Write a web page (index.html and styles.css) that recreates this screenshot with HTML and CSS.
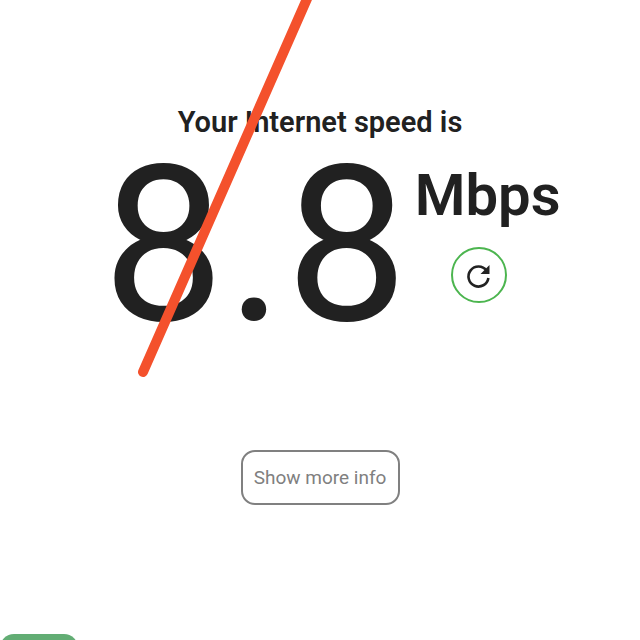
FILE: index.html
```html
<!DOCTYPE html>
<html lang="en">
<head>
  <meta charset="UTF-8">
  <title>Internet speed</title>
  <link rel="stylesheet" href="styles.css">
</head>
<body>

<main class="page">
  <h1 class="title">Your Internet speed is</h1>

  <div class="result">
    <div class="speed">8.8</div>
    <div class="side">
      <div class="unit">Mbps</div>
      <button class="reload" aria-label="Reload">
        <svg width="30" height="30" viewBox="0 0 30 30">
          <path d="M22.5 10.5A10 10 0 1 0 24.4 18" fill="none" stroke="#222" stroke-width="2.6"/>
          <path d="M25.5 5v9h-9z" fill="#222"/>
        </svg>
      </button>
    </div>
  </div>

  <button class="more">Show more info</button>
</main>

<div class="tab"></div>

<svg class="slash" width="640" height="640" viewBox="0 0 640 640">
  <line x1="143" y1="372" x2="310" y2="-8" stroke="#f4512c" stroke-width="10" stroke-linecap="round"/>
</svg>

</body>
</html>
```

FILE: styles.css
```css
body { margin: 0; background: #fff; font-family: Roboto, sans-serif; color: #212121; overflow: hidden; }
.page {
  height: 640px;
  box-sizing: border-box;
  padding-top: 104px;
  display: flex;
  flex-direction: column;
  align-items: center;
}
.title { margin: 0; font-size: 29px; line-height: 36px; font-weight: 600; }
.result { display: flex; align-items: flex-start; margin-top: -5px; margin-left: 10px; }
.speed { font-size: 217px; line-height: 222px; font-weight: 400; letter-spacing: 2px; margin-left: 13px; }
.side { display: flex; flex-direction: column; align-items: center; margin-left: 5px; padding-top: 27px; }
.unit { font-size: 58px; line-height: 66px; font-weight: 600; }
.reload {
  width: 56px;
  height: 56px;
  margin-top: 19px;
  margin-right: 18px;
  padding: 0;
  background: #fff;
  border: 2px solid #4cb54f;
  border-radius: 50%;
  display: flex;
  align-items: center;
  justify-content: center;
}
.more {
  width: 159px;
  height: 55px;
  margin-top: 93px;
  padding: 0;
  background: #fff;
  border: 2px solid #808080;
  border-radius: 14px;
  font-family: Roboto, sans-serif;
  font-size: 19px;
  color: #808080;
}
.tab {
  position: absolute;
  left: 0;
  top: 634px;
  width: 78px;
  height: 20px;
  background: #62ad74;
  border-radius: 14px 14px 0 0;
}
.slash { position: absolute; left: 0; top: 0; }
```
